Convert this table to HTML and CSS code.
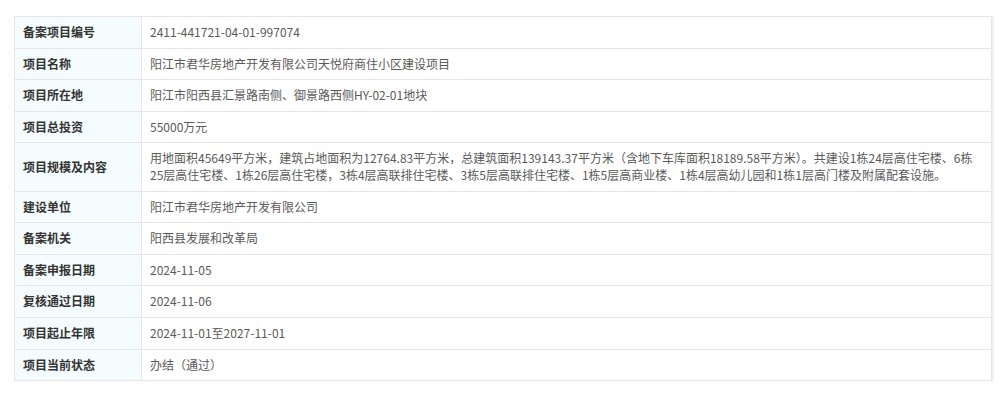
FILE: index.html
```html
<!DOCTYPE html>
<html lang="zh-CN">
<head>
    <meta charset="UTF-8">
    <title>项目备案信息</title>
    <link rel="stylesheet" href="styles.css">
</head>
<body>
    <div class="wrap">
        <table class="info-table">
            <tr><th>备案项目编号</th><td>2411-441721-04-01-997074</td></tr>
            <tr><th>项目名称</th><td>阳江市君华房地产开发有限公司天悦府商住小区建设项目</td></tr>
            <tr><th>项目所在地</th><td>阳江市阳西县汇景路南侧、御景路西侧HY-02-01地块</td></tr>
            <tr><th>项目总投资</th><td>55000万元</td></tr>
            <tr><th>项目规模及内容</th><td>用地面积45649平方米，建筑占地面积为12764.83平方米，总建筑面积139143.37平方米（含地下车库面积18189.58平方米）。共建设1栋24层高住宅楼、6栋25层高住宅楼、1栋26层高住宅楼，3栋4层高联排住宅楼、3栋5层高联排住宅楼、1栋5层高商业楼、1栋4层高幼儿园和1栋1层高门楼及附属配套设施。</td></tr>
            <tr><th>建设单位</th><td>阳江市君华房地产开发有限公司</td></tr>
            <tr><th>备案机关</th><td>阳西县发展和改革局</td></tr>
            <tr><th>备案申报日期</th><td>2024-11-05</td></tr>
            <tr><th>复核通过日期</th><td>2024-11-06</td></tr>
            <tr><th>项目起止年限</th><td>2024-11-01至2027-11-01</td></tr>
            <tr><th>项目当前状态</th><td>办结（通过）</td></tr>
        </table>
    </div>
</body>
</html>
```

FILE: styles.css
```css
body {
    margin: 0;
    background: #fff;
    font-family: "Microsoft YaHei", "Noto Sans CJK SC", sans-serif;
    font-size: 12px;
}
.wrap {
    padding: 16px 8px 30px 14px;
}
.info-table {
    width: 978px;
    border-collapse: collapse;
    border: 1px solid #e3e3e3;
    box-shadow: 2px 0 0 #f0f0f0;
}
.info-table th,
.info-table td {
    border: 1px solid #e6e6e6;
    padding: 7px 8px;
    line-height: 16.6px;
    text-align: left;
    vertical-align: middle;
}
.info-table th {
    width: 110px;
    background-color: #f5fcfd;
    color: #333;
    font-weight: bold;
}
.info-table td {
    color: #5a5a5a;
}
```
